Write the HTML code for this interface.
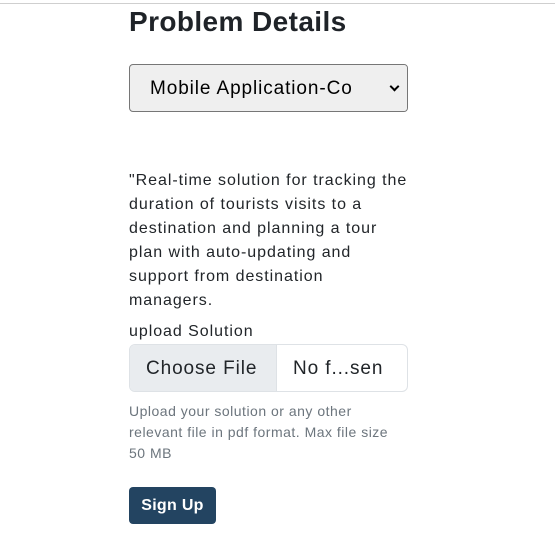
<!DOCTYPE html>
<html><head><style>
body{margin:0;width:555px;height:555px;background:#fff;position:relative;overflow:hidden;font-family:"Liberation Sans",sans-serif;color:#212529}
.a{position:absolute;white-space:nowrap}
.hr{position:absolute;left:0;top:3px;width:555px;height:1px;background:#cfcfcf}
h1{position:absolute;left:129px;top:6px;margin:0;font-size:28px;font-weight:bold;letter-spacing:0.4px;color:#1f2328}
.sel{position:absolute;left:129px;top:64px;width:277px;height:46px;border:1px solid #767676;border-radius:4px;background:#efefef;overflow:hidden}
.sel span{position:absolute;left:20px;top:13px;font-size:19px;letter-spacing:0.9px;color:#000}
.sel b{position:absolute;right:0;top:0;width:32px;height:46px;background:#efefef}
.sel i{position:absolute;right:9px;top:18px;width:5px;height:5px;border-right:2px solid #000;border-bottom:2px solid #000;transform:rotate(45deg)}
.p{left:129px;font-size:16px;letter-spacing:0.95px}
.file{position:absolute;left:129px;top:344px;width:277px;height:46px;border:1px solid #dee2e6;border-radius:6px;overflow:hidden}
.cf{position:absolute;left:0;top:0;width:146px;height:46px;background:#e9ecef;border-right:1px solid #dee2e6}
.help{left:129px;font-size:14px;color:#6c757d;letter-spacing:0.5px}
.btn{position:absolute;left:129px;top:487px;width:87px;height:37px;background:#234461;border-radius:4px;color:#fff;font-size:16px;text-align:center;line-height:37px;font-weight:bold;letter-spacing:0.3px}
</style></head><body>
<div class="hr"></div>
<h1>Problem Details</h1>
<div class="sel"><span>Mobile Application-Co</span><b></b><i></i></div>
<div class="a p" style="top:172px">"Real-time solution for tracking the</div>
<div class="a p" style="top:196px">duration of tourists visits to a</div>
<div class="a p" style="top:220px">destination and planning a tour</div>
<div class="a p" style="top:244px">plan with auto-updating and</div>
<div class="a p" style="top:268px">support from destination</div>
<div class="a p" style="top:292px">managers.</div>
<div class="a p" style="top:323px">upload Solution</div>
<div class="file"><div class="cf"></div>
<div class="a" style="left:16px;top:13px;font-size:19px;letter-spacing:0.9px">Choose File</div>
<div class="a" style="left:163px;top:13px;font-size:19px;letter-spacing:0.9px">No f...sen</div></div>
<div class="a help" style="top:403px">Upload your solution or any other</div>
<div class="a help" style="top:424px">relevant file in pdf format. Max file size</div>
<div class="a help" style="top:445px">50 MB</div>
<div class="btn">Sign Up</div>
</body></html>
